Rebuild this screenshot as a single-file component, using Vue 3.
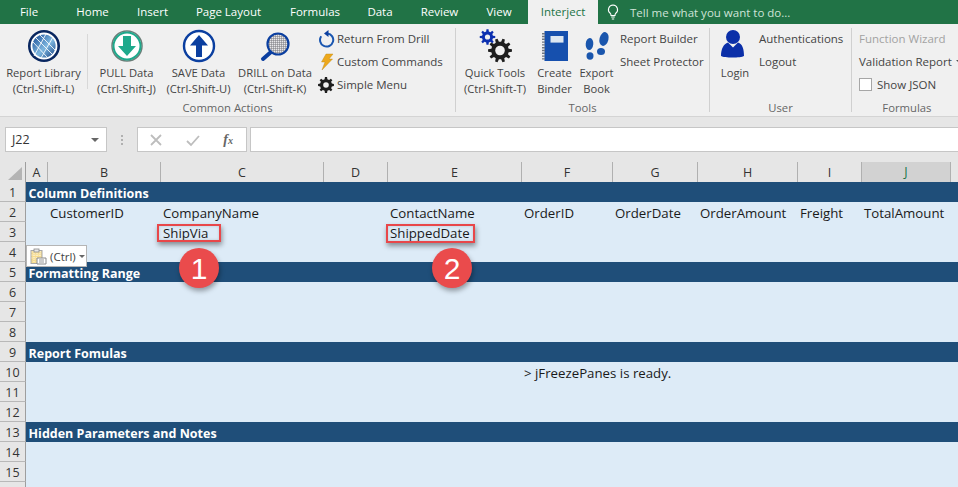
<script setup>
const tabs = [
  { t: 'File', w: 58 }, { t: 'Home', w: 69 }, { t: 'Insert', w: 51 }, { t: 'Page Layout', w: 101 },
  { t: 'Formulas', w: 72 }, { t: 'Data', w: 58 }, { t: 'Review', w: 61 }, { t: 'View', w: 58 },
]
const gear = (cx, cy, R, r, n) => {
  let d = ''
  const step = (Math.PI * 2) / n
  for (let i = 0; i < n; i++) {
    const a = i * step
    const pts = [[a - step * 0.3, r], [a - step * 0.17, R], [a + step * 0.17, R], [a + step * 0.3, r]]
    pts.forEach(([ang, rad], j) => {
      const x = (cx + Math.cos(ang) * rad).toFixed(2)
      const y = (cy + Math.sin(ang) * rad).toFixed(2)
      d += (i === 0 && j === 0 ? 'M' : 'L') + x + ' ' + y + ' '
    })
  }
  return d + 'Z'
}
const columns = [
  { l: 'A' }, { l: 'B' }, { l: 'C' }, { l: 'D' }, { l: 'E' }, { l: 'F' }, { l: 'G' }, { l: 'H' }, { l: 'I' }, { l: 'J', sel: true }, { l: '' },
]
const band = { 1: 'Column Definitions', 5: 'Formatting Range', 9: 'Report Fomulas', 13: 'Hidden Parameters and Notes' }
const cells = {
  2: ['', 'CustomerID', 'CompanyName', '', 'ContactName', 'OrderID', 'OrderDate', 'OrderAmount', 'Freight', 'TotalAmount', ''],
  3: ['', '', 'ShipVia', '', 'ShippedDate', '', '', '', '', '', ''],
  10: ['', '', '', '', '', '> jFreezePanes is ready.', '', '', '', '', ''],
}
const rows = Array.from({ length: 16 }, (_, i) => i + 1)
</script>

<template>
  <div class="app">
    <div class="tabs">
      <div v-for="t in tabs" :key="t.t" class="tab" :style="{ width: t.w + 'px' }">{{ t.t }}</div>
      <div class="tab active">Interject</div>
      <div class="tell">
        <svg width="14" height="16" viewBox="0 0 14 16"><path d="M7 1a4.6 4.6 0 0 0-2.8 8.2c.6.6.8 1.2.8 2.3h4c0-1.100.2-1.700.8-2.300A4.600 4.600 0 0 0 7 1zM5.200 13h3.600M5.800 15h2.400" fill="none" stroke="#fff" stroke-width="1.100"/></svg>
        <span>Tell me what you want to do...</span>
      </div>
    </div>

    <div class="ribbon">
      <section class="group g1">
        <div class="content">
          <button class="big w-lib">
            <svg class="ico" width="36" height="36" viewBox="0 0 36 36">
              <defs><linearGradient id="gl" x1="0" y1="0" x2="1" y2="1"><stop offset="0" stop-color="#0c3f8c"/><stop offset=".55" stop-color="#7fb8e0"/><stop offset="1" stop-color="#0b3478"/></linearGradient></defs>
              <circle cx="18" cy="18" r="16" fill="#08265f"/>
              <circle cx="18" cy="18" r="12.500" fill="url(#gl)" stroke="#fff" stroke-width="1.800"/>
              <path d="M9 9l18 18M14 7l16 16M7 14l14 15M20 6l-12 22M27 9L15 30" stroke="#fff" stroke-width="1" fill="none" opacity=".85"/>
            </svg>
            <span>Report Library</span><span>(Ctrl-Shift-L)</span>
          </button>
          <i class="vsep"></i>
          <button class="big w-pull">
            <svg class="ico" width="36" height="36" viewBox="0 0 36 36">
              <circle cx="18" cy="18" r="15" fill="#fff" stroke="#6b7d78" stroke-width="1.500"/>
              <circle cx="18" cy="18" r="13.500" fill="#fff" stroke="#1ea98c" stroke-width="2"/>
              <path d="M14 8h8v10h5L18 28 9 18h5z" fill="#1ea98c"/>
            </svg>
            <span>PULL Data</span><span>(Ctrl-Shift-J)</span>
          </button>
          <button class="big w-save">
            <svg class="ico" width="36" height="36" viewBox="0 0 36 36">
              <circle cx="18" cy="18" r="15" fill="#fff" stroke="#0b3fa0" stroke-width="2.400"/>
              <path d="M18 7l9 10.500h-6V29h-6V17.500H9z" fill="#0b3fa0"/>
            </svg>
            <span>SAVE Data</span><span>(Ctrl-Shift-U)</span>
          </button>
          <button class="big w-drill">
            <svg class="ico" width="36" height="36" viewBox="0 0 36 36">
              <defs><pattern id="mesh" width="2" height="2" patternUnits="userSpaceOnUse"><rect width="2" height="2" fill="#e8e8ea"/><path d="M0 0h2M0 0v2" stroke="#77777c" stroke-width="1"/></pattern></defs>
              <path d="M14 24L6 31" stroke="#0b3fa0" stroke-width="4" stroke-linecap="round"/>
              <circle cx="21" cy="16" r="10.500" fill="url(#mesh)" stroke="#0b3fa0" stroke-width="2.200"/>
            </svg>
            <span>DRILL on Data</span><span>(Ctrl-Shift-K)</span>
          </button>
          <div class="list first">
            <div class="row">
              <svg class="sico" width="18" height="18" viewBox="0 0 18 18"><path d="M10.500 3.400a6.600 6.600 0 1 1-6.300 2.800" fill="none" stroke="#1a56b0" stroke-width="2"/><path d="M11.500 0L7 3.500l4.500 3.500z" fill="#0b3fa0"/></svg>
              Return From Drill
            </div>
            <div class="row">
              <svg class="sico" width="18" height="18" viewBox="0 0 18 18"><path d="M9 1h7l-4 5h3.500L5 17l3-8H4.500z" fill="#eda81c" stroke="#b98412" stroke-width=".4"/></svg>
              Custom Commands
            </div>
            <div class="row">
              <svg class="sico" width="18" height="18" viewBox="0 0 18 18"><path :d="gear(9, 9, 8, 6, 8)" fill="#1e1e1e"/><circle cx="9" cy="9" r="2.800" fill="#f0f0f0"/></svg>
              Simple Menu
            </div>
          </div>
        </div>
        <div class="glabel">Common Actions</div>
      </section>
      <i class="sep"></i>

      <section class="group g2">
        <div class="content">
          <button class="big w-quick">
            <svg class="ico" width="36" height="36" viewBox="0 0 36 36">
              <path :d="gear(10.500, 9, 7.800, 5.600, 8)" fill="#0b2fb0"/><circle cx="10.500" cy="9" r="2.600" fill="#f0f0f0"/>
              <path :d="gear(23, 22.500, 12, 8.800, 10)" fill="#1e1e1e"/><circle cx="23" cy="22.500" r="4.800" fill="#f0f0f0"/>
            </svg>
            <span>Quick Tools</span><span>(Ctrl-Shift-T)</span>
          </button>
          <button class="big w-create">
            <svg class="ico" width="36" height="36" viewBox="0 0 36 36">
              <rect x="7.500" y="3" width="23.500" height="30" fill="#1650ae"/>
              <path d="M6.500 5v27" stroke="#6f7681" stroke-width="3" stroke-dasharray="1.400 1.400"/>
              <rect x="13.500" y="8" width="13" height="6.600" fill="#dde7f1"/>
            </svg>
            <span>Create</span><span>Binder</span>
          </button>
          <button class="big w-export">
            <svg class="ico" width="36" height="36" viewBox="0 0 36 36">
              <g fill="#1a56ad">
                <ellipse cx="10.500" cy="16" rx="3.800" ry="6" transform="rotate(5 10.500 16)"/>
                <ellipse cx="11" cy="28" rx="3.500" ry="3.700"/>
                <ellipse cx="25" cy="11" rx="4.500" ry="7" transform="rotate(14 25 11)"/>
                <ellipse cx="22" cy="23.500" rx="4" ry="3.500"/>
              </g>
            </svg>
            <span>Export</span><span>Book</span>
          </button>
          <div class="list narrow">
            <div class="row">Report Builder</div>
            <div class="row">Sheet Protector</div>
          </div>
        </div>
        <div class="glabel">Tools</div>
      </section>
      <i class="sep"></i>

      <section class="group g3">
        <div class="content">
          <button class="big w-login">
            <svg class="ico" width="36" height="36" viewBox="0 0 36 36">
              <circle cx="16" cy="9" r="7" fill="#0b2fa8"/>
              <path d="M4 28c0-7 2.500-12 7-13.500l5 5 5-5c4.500 1.500 6 6.500 6 13.500-3 2-20 2-23 0z" fill="#0b2fa8"/>
            </svg>
            <span>Login</span>
          </button>
          <div class="list narrow">
            <div class="row">Authentications</div>
            <div class="row">Logout</div>
          </div>
        </div>
        <div class="glabel">User</div>
      </section>
      <i class="sep"></i>

      <section class="group g4">
        <div class="content">
          <div class="list narrow">
            <div class="row disabled">Function Wizard</div>
            <div class="row">Validation Report <b class="caret"></b></div>
            <div class="row"><i class="check"></i>Show JSON</div>
          </div>
        </div>
        <div class="glabel">Formulas</div>
      </section>
    </div>

    <div class="formula">
      <div class="namebox"><span>J22</span><b class="caret dark"></b></div>
      <div class="dots"></div>
      <div class="fbtns">
        <svg width="14" height="14" viewBox="0 0 14 14"><path d="M2 2l10 10M12 2L2 12" stroke="#bdbdbd" stroke-width="1.800"/></svg>
        <svg width="14" height="14" viewBox="0 0 14 14"><path d="M1 8l4 4 8-9" stroke="#bdbdbd" stroke-width="1.800" fill="none"/></svg>
        <em>f<small>x</small></em>
      </div>
      <div class="finput"></div>
    </div>

    <div class="sheet">
      <div class="grid-row head">
        <div class="rh corner"><svg width="16" height="14" viewBox="0 0 16 14"><path d="M15 0v13H1z" fill="#b4b4b4"/></svg></div>
        <div v-for="c in columns" :key="c.l" class="ch" :class="{ sel: c.sel }">{{ c.l }}</div>
      </div>
      <div v-for="r in rows" :key="r" class="grid-row" :class="{ band: band[r] }">
        <div class="rh">{{ r === 16 ? '' : r }}</div>
        <template v-if="band[r]"><div class="bandcell">{{ band[r] }}</div></template>
        <template v-else>
          <div v-for="(c, i) in columns" :key="i" class="cell" :class="{ filled: cells[r] && cells[r][i] }">{{ cells[r] ? cells[r][i] : '' }}</div>
        </template>
      </div>

      <div class="mark m1"></div>
      <div class="mark m2"></div>
      <div class="num n1">1</div>
      <div class="num n2">2</div>
      <div class="paste">
        <svg width="17" height="17" viewBox="0 0 17 17">
          <rect x="1" y="2.500" width="11" height="13" fill="#f6dc8f" stroke="#a8a8a8"/>
          <path d="M1.500 4h10M1.500 7h10M1.500 10h10M4 3v12M7 3v12M10 3v12" stroke="#fff" stroke-width=".7" stroke-dasharray="1 1"/>
          <rect x="4" y="1" width="5" height="3" fill="#e8e8e8" stroke="#8a8a8a" stroke-width=".8"/>
          <path d="M7 10h9v6H7z" fill="#fff" stroke="#8a8a8a"/><path d="M9 12h5M9 14h5" stroke="#999"/>
        </svg>
        <span>(Ctrl)</span><b class="caret dark"></b>
      </div>
    </div>
  </div>
</template>

<style scoped>
.app { width: 958px; height: 487px; overflow: hidden; background: #e6e6e6; font-family: "Open Sans", "Noto Sans", sans-serif; color: #444; position: relative; }
.tabs { height: 24px; background: #217346; display: flex; align-items: center; font-size: 11.5px; color: #fff; }
.tab { text-align: center; height: 24px; line-height: 23px; flex: none; }
.tab.active { width: 70px; background: #f0f0f0; color: #217346; }
.tell { display: flex; align-items: center; gap: 10px; margin-left: 8px; color: #cfe3d8; }
.ribbon { background: #f0f0f0; border-bottom: 1px solid #d4d4d4; display: flex; padding-top: 4px; height: 88px; font-size: 11.5px; }
.group { display: flex; flex-direction: column; height: 88px; flex: none; }
.g1 { width: 455px; } .g2 { width: 253px; } .g3 { width: 141px; } .g4 { flex: 1; }
.content { display: flex; height: 72px; }
.glabel { height: 16px; line-height: 16px; text-align: center; font-size: 11.3px; color: #666; }
.sep { width: 1px; height: 84px; background: #d0d0d0; flex: none; }
.vsep { width: 1px; height: 55px; margin-top: 6px; background: #d8d8d8; flex: none; }
.big { border: 0; background: none; padding: 0; font: inherit; font-size: 11.2px; color: inherit; display: flex; flex-direction: column; align-items: center; flex: none; }
.big span { height: 16px; line-height: 15px; white-space: nowrap; }
.ico { height: 36px; margin-bottom: 1px; flex: none; }
.w-lib { width: 87px; } .w-pull { width: 75px; margin-left: 1px; } .w-save { width: 69px; } .w-drill { width: 84px; }
.w-quick { width: 78px; } .w-create { width: 41px; } .w-export { width: 43px; }
.w-login { width: 50px; }
.list { display: flex; flex-direction: column; white-space: nowrap; margin-top: -1px; }
.list.narrow { padding-left: 2px; }
.g3 .list.narrow { padding-left: 0; margin-left: -1px; } .g4 .list.narrow { padding-left: 7px; }
.row { height: 23px; display: flex; align-items: center; }
.sico { margin-right: 2px; width: 18px; flex: none; }
.disabled { color: #a2a2a2; }
.caret { display: inline-block; width: 0; height: 0; border: 3px solid transparent; border-top: 3px solid #555; border-bottom: 0; margin-left: 4px; }
.caret.dark { border-top-color: #666; }
.check { width: 11px; height: 11px; border: 1px solid #a6a6a6; background: #fff; margin-right: 5px; }
.formula { height: 46px; box-sizing: border-box; padding-top: 10px; display: flex; align-items: flex-start; }
.namebox { width: 102px; height: 25px; box-sizing: border-box; margin-left: 5px; background: #fff; border: 1px solid #c6c6c6; display: flex; align-items: center; justify-content: space-between; padding: 0 7px 0 6px; font-size: 12.5px; color: #333; }
.namebox .caret { border-width: 4px; border-top-width: 4px; border-bottom: 0; }
.dots { width: 2px; height: 10px; margin: 8px 14px 0 14px; border-left: 2px dotted #b0b0b0; box-sizing: border-box; }
.fbtns { width: 110px; height: 25px; box-sizing: border-box; background: #fff; border: 1px solid #c6c6c6; display: flex; align-items: center; justify-content: space-between; padding: 0 13px 0 11px; }
.fbtns em { font-family: "Liberation Serif", serif; font-size: 14px; color: #666; font-weight: bold; }
.fbtns small { font-size: 10px; }
.finput { flex: 1; height: 25px; box-sizing: border-box; margin-left: 3px; background: #fff; border: 1px solid #c6c6c6; border-right: 0; }
.sheet { position: relative; font-size: 13.25px; color: #1a1a1a; }
.grid-row { display: grid; grid-template-columns: 26px 22px 113px 163px 64px 134px 91px 85px 100px 64px 89px 1fr; height: 20px; }
.grid-row.band { grid-template-columns: 26px 1fr; }
.head { height: 20px; margin-top: -1px; }
.rh { background: #e6e6e6; border-bottom: 1px solid #b8b8b8; border-right: 1px solid #9e9e9e; box-sizing: border-box; text-align: center; line-height: 22px; color: #333; font-size: 12.5px; overflow: hidden; }
.corner { display: flex; align-items: flex-end; justify-content: flex-end; padding: 0 2px 2px 0; }
.ch { background: #e6e6e6; border-right: 1px solid #b0b0b0; border-bottom: 1px solid #9e9e9e; box-sizing: border-box; text-align: center; line-height: 21px; color: #333; font-size: 12.5px; }
.ch:last-child { border-right: 0; }
.ch.sel { background: #d2d2d2; border-bottom: 2px solid #217346; color: #217346; line-height: 20px; }
.cell { background: #ddebf7; white-space: nowrap; padding-left: 2px; line-height: 22px; height: 20px; min-width: 0; color: #1a1a1a; }
.cell.filled { z-index: 1; }
.bandcell { background: #1f4e79; color: #fff; font-weight: 700; font-size: 12.5px; padding-left: 2.5px; line-height: 23px; height: 20px; }
.mark { position: absolute; z-index: 2; border: 2px solid #e8474a; box-sizing: border-box; box-shadow: 1px 3px 5px rgba(0, 0, 0, .4), inset 0 0 3px rgba(0,0,0,.15); }
.m1 { left: 157px; top: 62px; width: 64px; height: 18px; }
.m2 { left: 386px; top: 62px; width: 89px; height: 19px; }
.num { position: absolute; z-index: 2; top: 86px; width: 40px; height: 40px; border-radius: 50%; background: #ea4b4c; color: #fff; font-size: 30px; line-height: 41px; text-align: center; box-shadow: 1px 3px 5px rgba(0, 0, 0, .35); font-family: "Liberation Sans", Arial, sans-serif; }
.n1 { left: 179px; } .n2 { left: 432px; }
.paste { position: absolute; z-index: 2; left: 26px; top: 83px; width: 61px; height: 22px; box-sizing: border-box; background: #fff; border: 1px solid #b5b5b5; display: flex; align-items: center; padding-left: 3px; gap: 3px; font-size: 11.5px; color: #444; }
.paste .caret { margin-left: 0; }
</style>
